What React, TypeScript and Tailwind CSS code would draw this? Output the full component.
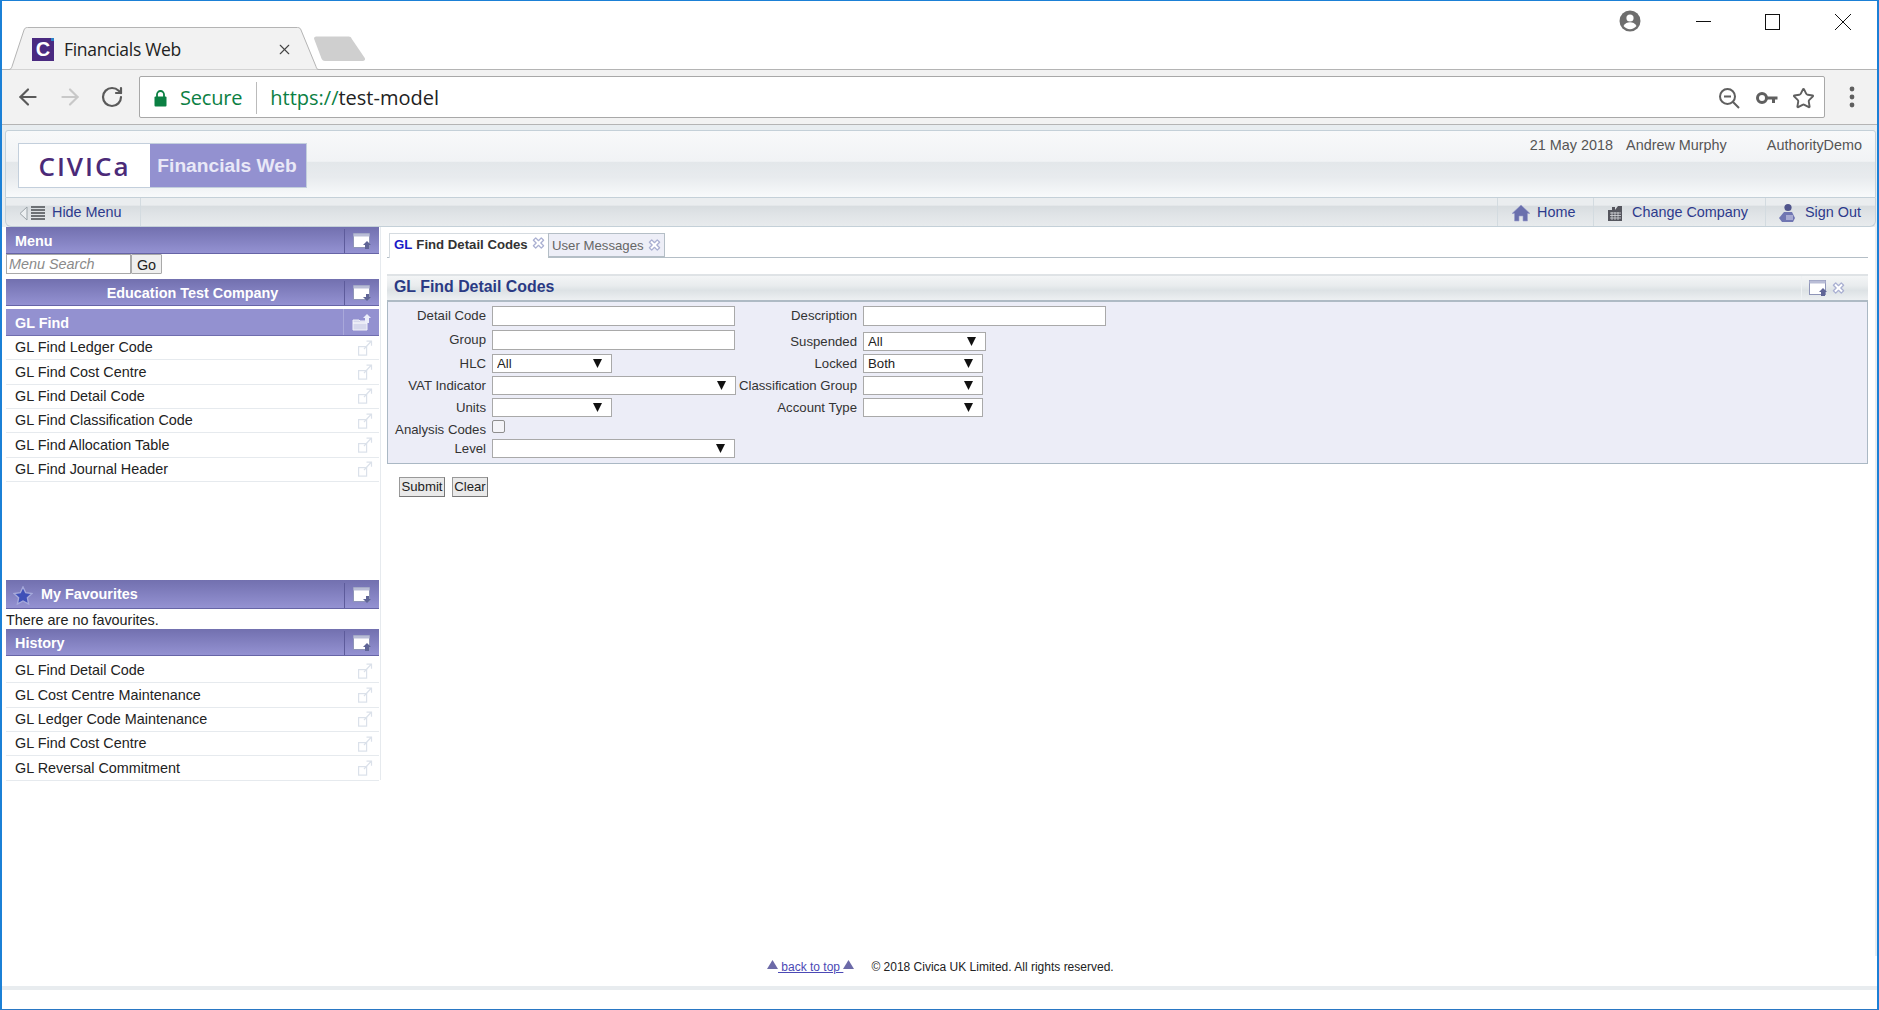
import { ArrowLeft, ArrowRight, RotateCw, Star, X } from "lucide-react";

const glFind = [
  "GL Find Ledger Code",
  "GL Find Cost Centre",
  "GL Find Detail Code",
  "GL Find Classification Code",
  "GL Find Allocation Table",
  "GL Find Journal Header",
];

const history = [
  "GL Find Detail Code",
  "GL Cost Centre Maintenance",
  "GL Ledger Code Maintenance",
  "GL Find Cost Centre",
  "GL Reversal Commitment",
];

const WinIcon = ({ up = false }: { up?: boolean }) => (
  <svg width="19" height="17" viewBox="0 0 19 17">
    <rect x="0.5" y="0.5" width="16" height="14" fill="#fff" stroke="#8f95b8" />
    <rect x="0.5" y="0.5" width="16" height="3" fill="#b9bdd6" />
    {up ? (
      <path d="M14 8l4 4h-2v4h-4v-4h-2z" fill="#5f6496" />
    ) : (
      <path d="M13 9h3v3h2l-4 4-4-4h3z" fill="#5f6496" />
    )}
  </svg>
);

const FolderIcon = () => (
  <svg width="20" height="17" viewBox="0 0 20 17">
    <path d="M1 6h6l1 1h7v9H1z" fill="#d6d8ec" stroke="#f1f2fa" />
    <path d="M1 9h14" stroke="#fff" />
    <path d="M15 0l4 4h-2v5h-4V4h-2z" fill="#eceefa" />
  </svg>
);

const CloseIcon = () => (
  <svg width="13" height="14" viewBox="0 0 14 14">
    <polygon
      points="4,1.5 7,4.5 10,1.5 12.5,4 9.5,7 12.5,10 10,12.5 7,9.5 4,12.5 1.5,10 4.5,7 1.5,4"
      fill="#fff"
      stroke="#aab0d2"
      strokeWidth="1.4"
      strokeLinejoin="round"
    />
  </svg>
);

const OpenIcon = () => (
  <svg width="15" height="16" viewBox="0 0 15 16" fill="none" stroke="#dbe1ea" strokeWidth="1.2">
    <rect x="0.6" y="6.6" width="8" height="8.5" />
    <path d="M6 9l7-7.5M8.5 1.2h5v4.6" />
  </svg>
);

const HomeIcon = () => (
  <svg width="20" height="18" viewBox="0 0 20 18">
    <path d="M10 1L1 9.5h2.5V17h4.5v-5h4v5h4.5V9.5H19z" fill="#6a70ad" stroke="#9aa0cc" strokeWidth="0.6" />
  </svg>
);

const CompanyIcon = () => (
  <svg width="17" height="18" viewBox="0 0 17 18">
    <path d="M1 17V6h4V3h3v3l3-4h4v15z" fill="#55565e" />
    <path d="M3 9h11M3 11.5h11M3 14h11M5 8v8M8 8v8M11 8v8" stroke="#d7d8dc" strokeWidth="0.8" />
  </svg>
);

const SignOutIcon = () => (
  <svg width="20" height="20" viewBox="0 0 20 20">
    <circle cx="10" cy="4.5" r="3.6" fill="#50558c" />
    <path d="M6 9h8l3 6-2 4H4l-3-4z" fill="#7076b2" />
    <path d="M8 12h7v5H8z" fill="#a7aad2" />
  </svg>
);

const HideMenuIcon = () => (
  <svg width="27" height="17" viewBox="0 0 27 17">
    <path d="M8 2L1 8.5 8 15z" fill="#eceff1" stroke="#9ba3a8" />
    <path d="M12 2h14M12 5h14M12 8h14M12 11h14M12 14h14" stroke="#6e7276" strokeWidth="1.8" />
  </svg>
);

const Triangle = () => (
  <svg className="mt-[2px]" width="11" height="9" viewBox="0 0 11 9">
    <path d="M5.5 0L11 9H0z" fill="#6c6aa8" />
  </svg>
);

const PurpleBar = ({ title, icon, center }: { title: string; icon: React.ReactNode; center?: boolean }) => (
  <div className="flex h-[27px] items-stretch border-b border-[#6664a6] bg-gradient-to-b from-[#7270af] to-[#9492d2] font-bold text-white">
    <div className={`flex flex-1 items-center pt-[3px] text-[14.4px] ${center ? "justify-center pl-[35px]" : "pl-[9px]"}`}>{title}</div>
    <div className="mt-[2px] flex w-[35px] items-center justify-center border-l border-[#5d5b9b]">{icon}</div>
  </div>
);

const SideRow = ({ label }: { label: string }) => (
  <div className="flex h-[24.35px] items-center border-b border-[#e6eaee] pl-[9px] pr-[6px] text-[14.4px] text-[#222]">
    <span className="pt-[1px]">{label}</span>
    <span className="ml-auto">
      <OpenIcon />
    </span>
  </div>
);

const FieldLabel = ({ w, text }: { w: string; text: string }) => (
  <label className={`${w} mr-[6px] shrink-0 whitespace-nowrap text-right text-[13.2px] leading-[19px] text-[#333]`}>{text}</label>
);

const TextBox = () => <input className="h-[20px] w-[243px] border border-[#a9a9a9] bg-white" />;

const SelectBox = ({ w, value }: { w: string; value?: string }) => (
  <div className={`relative h-[19px] ${w}`}>
    <select className="block h-full w-full appearance-none rounded-none border border-[#a9a9a9] bg-white pb-[1px] pl-[4px] text-[13.2px] leading-[15px] text-[#222]">
      <option>{value}</option>
    </select>
    <svg className="pointer-events-none absolute right-[10px] top-[5px]" width="9" height="9" viewBox="0 0 9 9">
      <path d="M0 0h9L4.5 9z" fill="#111" />
    </svg>
  </div>
);

export default function App() {
  return (
    <div className="flex h-[1010px] w-[1879px] flex-col overflow-hidden border-x-2 border-t border-b border-x-[#1b80d6] border-t-[#1b80d6] border-b-[#2a78c4] bg-white font-['Liberation_Sans',sans-serif]">
      {/* browser title row */}
      <div className="flex h-[69px] shrink-0 items-end border-b border-[#b4b4b4]">
        <div className="relative ml-[5px] flex h-[42px] w-[314px] items-center pl-[25px] pt-[2px] font-['Open_Sans',sans-serif] text-[#222]">
          <svg className="absolute inset-0" width="314" height="43" viewBox="0 0 314 43">
            <path d="M0 42.5h2c1.500 0 2.300-1 3-3L17 3c.6-1.600 1.500-2.500 3.500-2.500h270c2 0 3 1 3.500 2.500L309 39.500c.6 2 1 3 3 3h2" fill="#f2f2f2" stroke="#b4b4b4" />
          </svg>
          <div className="relative mr-[10px] flex h-[23px] w-[22px] items-center justify-center bg-[#4a2a80] font-['Liberation_Sans',sans-serif] text-[20px] font-bold text-white">
            C
            <span className="absolute right-0 top-0 h-[3px] w-[3px] bg-[#2a80c8]" />
          </div>
          <span className="relative text-[17.500px] tracking-[-0.3px]">Financials Web</span>
          <X className="absolute right-[28px] top-[14px] text-[#444]" size={17} strokeWidth={1.6} />
        </div>
        <svg className="mb-[7px] ml-[-9px]" width="56" height="26" viewBox="0 0 52 26" preserveAspectRatio="none">
          <path d="M2 3c-.4-1.600.6-2.500 2-2.500h30c1.500 0 2.300.7 3 2.500l12 19c.8 1.600 0 3-2 3H12c-1.500 0-2.300-.8-3-2z" fill="#cfcfcf" />
        </svg>
        <div className="ml-auto flex items-start self-start pt-[9px]">
          <svg width="22" height="22" viewBox="0 0 22 22" className="mr-[55px]">
            <circle cx="11" cy="11" r="10.500" fill="#6e6e6e" />
            <circle cx="11" cy="8" r="3.600" fill="#fff" />
            <path d="M4.500 16c1.500-3 4-3.800 6.500-3.800s5 .8 6.500 3.800c-1.500 2-4 3.200-6.500 3.200s-5-1.200-6.500-3.200z" fill="#fff" />
          </svg>
          <div className="mr-[54px] mt-[11px] h-px w-[15px] bg-[#111]" />
          <div className="mr-[54px] mt-[4px] h-[16px] w-[15px] border border-[#111]" />
          <svg width="18" height="18" viewBox="0 0 18 18" className="mr-[25px] mt-[3px]" stroke="#111" strokeWidth="1">
            <path d="M1 1l16 16M17 1L1 17" />
          </svg>
        </div>
      </div>

      {/* browser toolbar */}
      <div className="flex h-[55px] shrink-0 items-center border-b border-[#b4b4b4] bg-[#f2f2f2]">
        <ArrowLeft className="ml-[13px] text-[#5a5a5a]" size={26} strokeWidth={2} />
        <ArrowRight className="ml-[16px] text-[#c8c8c8]" size={26} strokeWidth={2} />
        <RotateCw className="ml-[17px] text-[#5a5a5a]" size={24} strokeWidth={2.200} />
        <div className="ml-[15px] flex h-[42px] w-[1686px] items-center rounded-[2px] border border-[#a8a8a8] bg-white pt-[2px] font-['Open_Sans',sans-serif] text-[20px]">
          <svg className="ml-[14px]" width="13" height="17" viewBox="0 0 13 17">
            <path d="M3 7V4.500a3.500 3.500 0 0 1 7 0V7" fill="none" stroke="#0b8043" strokeWidth="1.800" />
            <rect x="0.500" y="6.500" width="12" height="10" rx="1" fill="#0b8043" />
          </svg>
          <span className="ml-[13px] tracking-[-0.2px] text-[#0b8043]">Secure</span>
          <span className="ml-[14px] h-[32px] w-px bg-[#bbb]" />
          <span className="ml-[13px] text-[#0b8043]">https://</span>
          <span className="text-[#222]">test-model</span>
          <span className="ml-auto flex items-center">
            <svg width="24" height="24" viewBox="0 0 24 24" fill="none" stroke="#5f5f5f" strokeWidth="2">
              <circle cx="10.500" cy="10.500" r="7.500" />
              <path d="M16 16l6 6M7 10.500h7" />
            </svg>
            <svg className="ml-[15px]" width="22" height="14" viewBox="0 0 22 14">
              <circle cx="6" cy="7" r="4.500" fill="none" stroke="#5f5f5f" strokeWidth="3" />
              <path d="M10 5.500h11.500v3H19v3.500h-3V8.500h-6z" fill="#5f5f5f" />
            </svg>
            <Star className="ml-[14px] mr-[9px] text-[#5f5f5f]" size={23} strokeWidth={2} />
          </span>
        </div>
        <svg className="ml-[24px]" width="6" height="22" viewBox="0 0 6 22" fill="#5f5f5f">
          <circle cx="3" cy="3" r="2.400" />
          <circle cx="3" cy="11" r="2.400" />
          <circle cx="3" cy="19" r="2.400" />
        </svg>
      </div>

      {/* app header */}
      <div className="shrink-0 bg-[#e8edf0] pl-[3px] pr-px pt-[5px]">
        <div className="flex h-[68px] items-start rounded-t-[3px] border border-[#c4d0d8] bg-[linear-gradient(#f8f9fa_0%,#f1f3f5_46%,#e3e7ea_47%,#e8ebee_70%,#f8fafb_100%)]">
          <div className="ml-[12px] mt-[12px] flex h-[45px] border border-[#c3cfdc]">
            <div className="flex w-[131px] items-center justify-center bg-white font-['Open_Sans',sans-serif] text-[26px] font-semibold leading-none tracking-[2px] text-[#4b2a78]">
              CIVICa
            </div>
            <div className="flex w-[156px] items-center justify-center whitespace-nowrap bg-[#9391d0] pr-[2px] pt-[2px] text-[19.2px] font-bold text-[#e9e8f7]">
              Financials Web
            </div>
          </div>
          <div className="ml-auto mr-[13px] mt-[4px] flex text-[14.4px] text-[#555]">
            <span>21 May 2018</span>
            <span className="ml-[13px]">Andrew Murphy</span>
            <span className="ml-[40px]">AuthorityDemo</span>
          </div>
        </div>
        <div className="flex h-[29px] items-stretch rounded-b-[6px] border-x border-b border-[#c4d0d8] bg-[linear-gradient(#eaedef_0%,#eaedef_25%,#d8dde0_30%,#e0e4e7_60%,#e8ebed_100%)] text-[14.4px] text-[#2d3a8c]">
          <div className="flex w-[135px] items-center rounded-bl-[6px] border-r border-[#d3dbe0] pl-[13px] pt-[2px]">
            <HideMenuIcon />
            <span className="ml-[6px]">Hide Menu</span>
          </div>
          <div className="ml-auto flex w-[96px] items-center border-l border-[#d3dbe0] pl-[13px] pt-[2px]">
            <HomeIcon />
            <span className="ml-[6px]">Home</span>
          </div>
          <div className="flex w-[172px] items-center border-l border-[#d3dbe0] pl-[13px] pt-[2px]">
            <CompanyIcon />
            <span className="ml-[8px]">Change Company</span>
          </div>
          <div className="flex w-[110px] items-center border-l border-[#d3dbe0] pl-[12px] pt-[2px]">
            <SignOutIcon />
            <span className="ml-[7px]">Sign Out</span>
          </div>
        </div>
      </div>

      {/* body */}
      <div className="flex min-h-0 flex-1 border-r-2 border-[#e8edf0]">
        <div className="ml-[4px] h-[553px] w-[375px] shrink-0 border-r border-[#e6eaee] pr-px">
          <PurpleBar title="Menu" icon={<WinIcon up />} />
          <div className="flex h-[20px] text-[14.4px]">
            <input placeholder="Menu Search" className="h-[20px] w-[125px] border border-[#a9a9a9] pl-[2px] pt-px italic placeholder:text-[#8a8a8a]" />
            <button className="h-[20px] w-[31px] rounded-[1px] border border-[#a9a9a9] bg-[#efefef] text-[#222]">Go</button>
          </div>
          <div className="mt-[5px]">
            <PurpleBar title="Education Test Company" icon={<WinIcon />} center />
          </div>
          <div className="mt-[3px] flex h-[27px] items-stretch border-b border-[#6f6dae] bg-[#9391d0] text-[14.4px] font-bold text-white">
            <div className="flex flex-1 items-center pl-[9px] pt-[3px]">GL Find</div>
            <div className="flex w-[36px] items-center justify-center border-l border-[#a9a8da]">
              <FolderIcon />
            </div>
          </div>
          {glFind.map((label) => (
            <SideRow key={label} label={label} />
          ))}
          <div className="mt-[98px]">
            <div className="flex h-[29px] items-stretch border-b border-[#6664a6] bg-gradient-to-b from-[#7270af] to-[#9492d2] font-bold text-white">
              <div className="flex flex-1 items-center pl-[7px] pt-[2px] text-[14.4px]">
                <svg width="20" height="19" viewBox="0 0 20 19">
                  <path d="M10 1l2.700 5.700 6.300.8-4.600 4.300 1.200 6.200L10 15l-5.600 3 1.200-6.200L1 7.500l6.300-.8z" fill="#3f50b8" stroke="#a6a9da" strokeWidth="1.400" />
                </svg>
                <span className="ml-[8px]">My Favourites</span>
              </div>
              <div className="mt-[3px] flex w-[35px] items-center justify-center border-l border-[#5d5b9b]">
                <WinIcon />
              </div>
            </div>
          </div>
          <div className="flex h-[20px] items-end text-[14.4px] leading-[17px] text-[#222]">There are no favourites.</div>
          <PurpleBar title="History" icon={<WinIcon up />} />
          <div className="mt-[3px]">
            {history.map((label) => (
              <SideRow key={label} label={label} />
            ))}
          </div>
        </div>

        <div className="min-w-0 flex-1 pl-[6px] pr-[7px] pt-[6px]">
          {/* tabs */}
          <div className="flex h-[25px] items-start border-b border-[#b4bec6] pl-[2px] text-[13.2px]">
            <div className="flex h-[25px] w-[159px] items-start whitespace-nowrap border-l border-t border-[#d5dbe0] bg-white pl-[4px] pt-[1px] font-bold">
              <span className="text-[#1a1ac8]">GL</span>
              <span className="ml-[4px] text-[#333]">Find Detail Codes</span>
              <span className="ml-[4px] mt-[1px]">
                <CloseIcon />
              </span>
            </div>
            <div className="flex h-[24px] w-[117px] items-center whitespace-nowrap border border-[#b4bec6] bg-[#edeef7] pl-[3px] text-[#666]">
              <span className="mt-[2px]">User Messages</span>
              <span className="ml-[4px]">
                <CloseIcon />
              </span>
            </div>
          </div>

          {/* panel */}
          <div className="mt-[16px] flex h-[28px] items-center border-b-2 border-t-2 border-b-[#aebac4] border-t-[#dfe3e6] bg-[linear-gradient(#f3f5f6_0%,#e9ecee_40%,#dde2e5_60%,#edf0f2_100%)]">
            <span className="ml-[7px] pb-[2px] text-[15.900px] font-bold text-[#2a3a84]">GL Find Detail Codes</span>
            <div className="ml-auto flex h-full w-[67px] items-center border-l border-[#eef1f3] pl-[7px]">
              <WinIcon up />
              <span className="ml-[4px]">
                <CloseIcon />
              </span>
            </div>
          </div>
          <div className="flex h-[162px] border-x border-b border-[#aab8c4] bg-[#ecedf7] pt-[4px]">
            <div className="w-[348px] shrink-0">
              <div className="flex h-[24px] items-start">
                <FieldLabel w="w-[98px]" text="Detail Code" />
                <TextBox />
              </div>
              <div className="flex h-[24px] items-start">
                <FieldLabel w="w-[98px]" text="Group" />
                <TextBox />
              </div>
              <div className="flex h-[22px] items-start">
                <FieldLabel w="w-[98px]" text="HLC" />
                <SelectBox w="w-[120px]" value="All" />
              </div>
              <div className="flex h-[22px] items-start">
                <FieldLabel w="w-[98px]" text="VAT Indicator" />
                <SelectBox w="w-[244px]" />
              </div>
              <div className="flex h-[22px] items-start">
                <FieldLabel w="w-[98px]" text="Units" />
                <SelectBox w="w-[120px]" />
              </div>
              <div className="flex h-[19px] items-start">
                <FieldLabel w="w-[98px]" text="Analysis Codes" />
                <input type="checkbox" className="m-0 block h-[13px] w-[13px] appearance-none rounded-[2px] border border-[#8e8e8e] bg-[#f4f4f8]" />
              </div>
              <div className="flex h-[19px] items-start">
                <FieldLabel w="w-[98px]" text="Level" />
                <SelectBox w="w-[243px]" />
              </div>
            </div>
            <div>
              <div className="flex h-[26px] items-start">
                <FieldLabel w="w-[121px]" text="Description" />
                <TextBox />
              </div>
              <div className="flex h-[22px] items-start">
                <FieldLabel w="w-[121px]" text="Suspended" />
                <SelectBox w="w-[123px]" value="All" />
              </div>
              <div className="flex h-[22px] items-start">
                <FieldLabel w="w-[121px]" text="Locked" />
                <SelectBox w="w-[120px]" value="Both" />
              </div>
              <div className="flex h-[22px] items-start">
                <FieldLabel w="w-[121px]" text="Classification Group" />
                <SelectBox w="w-[120px]" />
              </div>
              <div className="flex h-[22px] items-start">
                <FieldLabel w="w-[121px]" text="Account Type" />
                <SelectBox w="w-[120px]" />
              </div>
            </div>
          </div>
          <div className="ml-[12px] mt-[13px] flex gap-[7px] text-[13.2px] text-[#222]">
            <button className="h-[20px] w-[46px] border border-[#999] border-b-[#777] border-r-[#777] bg-[#e9e9e9] leading-none">Submit</button>
            <button className="h-[20px] w-[36px] border border-[#999] border-b-[#777] border-r-[#777] bg-[#e9e9e9] leading-none">Clear</button>
          </div>
        </div>
      </div>

      {/* footer */}
      <div className="flex h-[30px] shrink-0 items-start pl-[765px] pt-[2px] text-[12px] text-[#222]">
        <Triangle />
        <a className="whitespace-pre text-[#4b49b5] underline">{"\u00a0back to top\u00a0"}</a>
        <Triangle />
        <span className="ml-[17px]">© 2018 Civica UK Limited. All rights reserved.</span>
      </div>
      <div className="h-[4px] shrink-0 bg-[#e8ecef]" />
      <div className="h-[19px] shrink-0" />
    </div>
  );
}
